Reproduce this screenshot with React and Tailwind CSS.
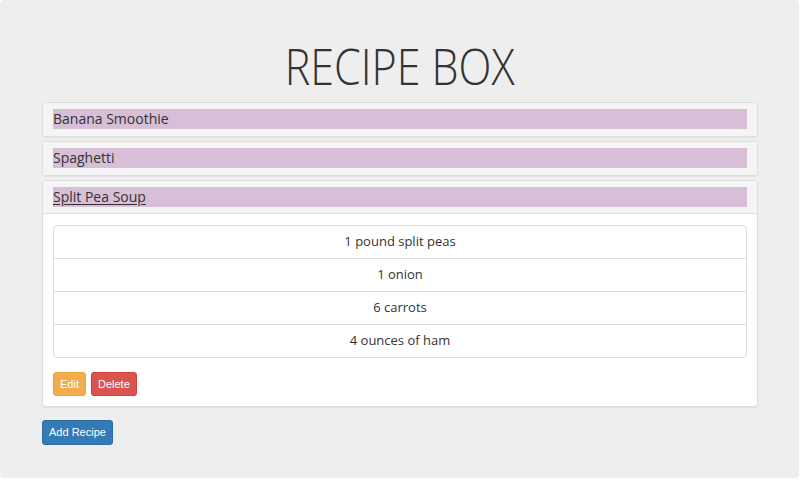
import React from "react";

const exo = { fontFamily: '"Open Sans", "Noto Sans", sans-serif' };
const arial = { fontFamily: '"Liberation Sans", Arial, sans-serif' };

function Heading({ title, underline, open }) {
  return (
    <div className={`bg-[#f5f5f5] px-[10px] pt-[6px] ${open ? "pb-[6px] border-b border-[#ddd]" : "pb-[7px]"}`}>
      <div
        className={`bg-[#d8bfd8] h-[20px] leading-[20px] text-[14px] text-[#333] ${underline ? "underline underline-offset-2" : ""}`}
        style={exo}
      >
        {title}
      </div>
    </div>
  );
}

export default function App() {
  const ingredients = ["1 pound split peas", "1 onion", "6 carrots", "4 ounces of ham"];
  const panel = "border border-[#ddd] rounded-[4px] bg-white shadow-[0_1px_1px_rgba(0,0,0,0.05)] overflow-hidden";
  return (
    <div className="w-[800px] h-[480px] bg-white">
      <div className="w-[799px] h-[478px] bg-[#eeeeee] rounded-[4px] overflow-hidden">
        <div className="pl-[42px] pr-[41px]">
          <div className="h-[102px] pt-[35px] flex justify-center">
            <h1
              className="text-[50px] font-light text-[#333] leading-[62px] scale-x-[0.86] whitespace-nowrap"
              style={exo}
            >
              RECIPE BOX
            </h1>
          </div>
          <div className="flex flex-col gap-[4px]">
            <div className={panel}>
              <Heading title="Banana Smoothie" />
            </div>
            <div className={panel}>
              <Heading title="Spaghetti" />
            </div>
            <div className={panel}>
              <Heading title="Split Pea Soup" underline open />
              <div className="px-[10px] pt-[11px] pb-[10px]">
                <div className="border border-[#ddd] rounded-[4px]">
                  {ingredients.map((t, i) => (
                    <div
                      key={t}
                      className={`flex items-center justify-center text-[13px] text-[#333] ${i > 0 ? "h-[33px] border-t border-[#ddd]" : "h-[32px]"}`}
                      style={exo}
                    >
                      {t}
                    </div>
                  ))}
                </div>
                <div className="flex gap-[5px] mt-[14px]">
                  <button
                    className="h-[24px] px-[6px] bg-[#f0ad4e] border border-[#eea236] rounded-[3px] text-white text-[11px]"
                    style={arial}
                  >
                    Edit
                  </button>
                  <button
                    className="h-[24px] px-[6px] bg-[#d9534f] border border-[#d43f3a] rounded-[3px] text-white text-[11px]"
                    style={arial}
                  >
                    Delete
                  </button>
                </div>
              </div>
            </div>
          </div>
          <button
            className="mt-[13px] h-[25px] px-[6px] bg-[#337ab7] border border-[#2e6da4] rounded-[3px] text-white text-[11px]"
            style={arial}
          >
            Add Recipe
          </button>
        </div>
      </div>
    </div>
  );
}
